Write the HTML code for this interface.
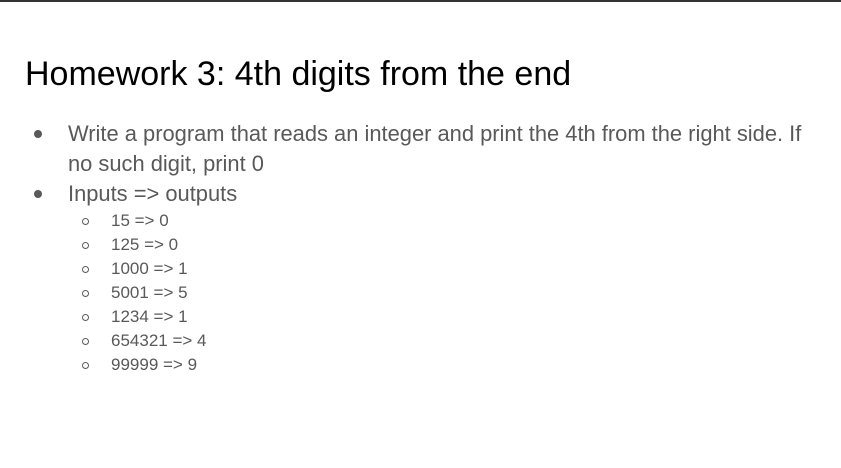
<!DOCTYPE html>
<html><head><style>
body{margin:0;width:841px;height:468px;background:#fff;position:relative;overflow:hidden;font-family:"Liberation Sans",Arial,sans-serif}
.top{position:absolute;left:0;top:0;width:841px;height:2px;background:#333}
.t{position:absolute;left:25px;top:55px;font-size:34px;color:#000;white-space:nowrap}
.l{position:absolute;font-size:21.9px;color:#595959;white-space:nowrap}
.s{position:absolute;left:111px;font-size:17px;color:#595959;white-space:nowrap}
.d{position:absolute;left:34px;width:8px;height:8px;border-radius:50%;background:#595959}
.c{position:absolute;left:82px;width:5px;height:5px;border-radius:50%;border:1px solid #595959}
</style></head><body>
<div class="top"></div>
<div class="t">Homework 3: 4th digits from the end</div>
<div class="d" style="top:130px"></div>
<div class="l" style="left:68px;top:121px">Write a program that reads an integer and print the 4th from the right side. If</div>
<div class="l" style="left:68px;top:151px">no such digit, print 0</div>
<div class="d" style="top:190px"></div>
<div class="l" style="left:68px;top:181px">Inputs =&gt; outputs</div>
<div class="c" style="top:218px"></div><div class="s" style="top:211px">15 =&gt; 0</div>
<div class="c" style="top:242px"></div><div class="s" style="top:235px">125 =&gt; 0</div>
<div class="c" style="top:266px"></div><div class="s" style="top:259px">1000 =&gt; 1</div>
<div class="c" style="top:290px"></div><div class="s" style="top:283px">5001 =&gt; 5</div>
<div class="c" style="top:314px"></div><div class="s" style="top:307px">1234 =&gt; 1</div>
<div class="c" style="top:338px"></div><div class="s" style="top:331px">654321 =&gt; 4</div>
<div class="c" style="top:362px"></div><div class="s" style="top:355px">99999 =&gt; 9</div>
</body></html>
